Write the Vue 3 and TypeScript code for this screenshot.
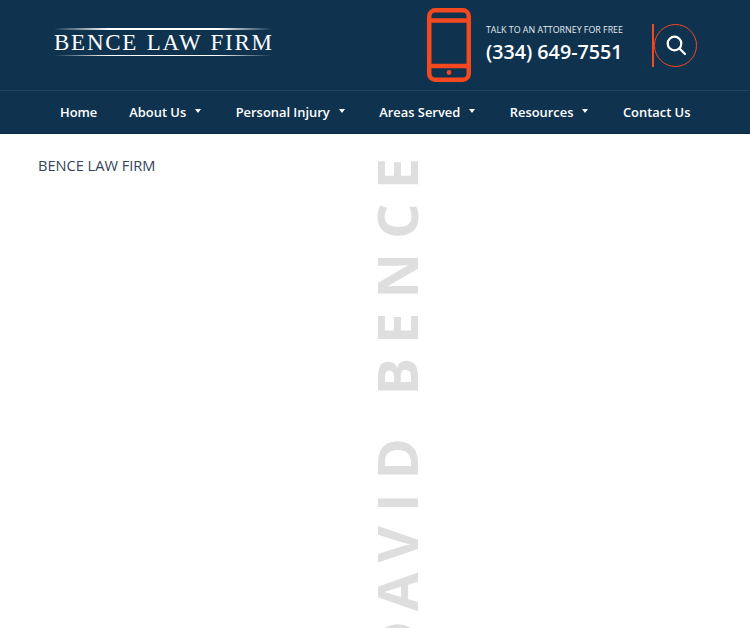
<script setup lang="ts">
interface NavItem { label: string; caret: boolean }
const nav: NavItem[] = [
  { label: 'Home', caret: false },
  { label: 'About Us', caret: true },
  { label: 'Personal Injury', caret: true },
  { label: 'Areas Served', caret: true },
  { label: 'Resources', caret: true },
  { label: 'Contact Us', caret: false },
]
</script>

<template>
  <div class="page">
    <header class="top">
      <a class="logo">
        <span class="rule"></span>
        <span class="logo-text">BENCE LAW FIRM</span>
        <span class="rule"></span>
      </a>
      <div class="contact">
        <svg class="phone" width="44" height="74" viewBox="0 0 44 74" fill="none" stroke="#f4491f" stroke-width="4.5">
          <rect x="2.25" y="2.25" width="39.5" height="69.5" rx="6" />
          <path d="M2 12.5H42M2 58H42" />
          <circle cx="22" cy="64.5" r="2.4" fill="#f4491f" stroke="none" />
        </svg>
        <div class="call">
          <div class="talk">TALK TO AN ATTORNEY FOR FREE</div>
          <div class="num">(334) 649-7551</div>
        </div>
        <div class="divider"></div>
        <div class="search">
          <svg width="22" height="22" viewBox="0 0 22 22" fill="none" stroke="#fff" stroke-width="2.2">
            <circle cx="9.5" cy="9.5" r="6.8" />
            <path d="M14.5 14.5L20 20" stroke-linecap="round" />
          </svg>
        </div>
      </div>
    </header>
    <nav class="nav">
      <a v-for="item in nav" :key="item.label" class="nav-item">
        {{ item.label }}<span v-if="item.caret" class="caret"></span>
      </a>
    </nav>
    <main class="main">
      <p class="crumb">BENCE LAW FIRM</p>
      <div class="watermark"><span class="kern">DA</span>VID BENCE</div>
    </main>
  </div>
</template>

<style>
html, body { margin: 0; padding: 0; background: #fff; overflow: hidden; }
</style>

<style scoped>
.page {
  width: 750px;
  height: 628px;
  overflow: hidden;
  font-family: "Open Sans", sans-serif;
}
.top {
  height: 90px;
  background: #0f334f;
  border-bottom: 1px solid #1d4460;
  display: flex;
  align-items: center;
  justify-content: space-between;
  padding: 0 53px 0 54px;
}
.logo {
  display: flex;
  flex-direction: column;
  align-items: stretch;
  width: 218px;
  margin-bottom: 6px;
}
.rule {
  height: 1.5px;
  background: linear-gradient(90deg, rgba(255,255,255,0), #fff 25%, #fff 75%, rgba(255,255,255,0));
}
.logo-text {
  font-family: "Liberation Serif", serif;
  font-size: 23px;
  line-height: 25px;
  letter-spacing: 1.75px;
  word-spacing: 1px;
  color: #fff;
  white-space: nowrap;
}
.contact {
  display: flex;
  align-items: center;
}
.phone { display: block; margin-right: 15px; }
.call { color: #fff; width: 166px; margin-top: -2px; }
.talk {
  font-size: 8.85px;
  line-height: 14px;
  color: #e6ebef;
  white-space: nowrap;
}
.num {
  font-size: 19.7px;
  line-height: 28px;
  font-weight: 600;
  white-space: nowrap;
  margin-top: 1px;
}
.divider {
  width: 1.5px;
  height: 43px;
  background: #f4491f;
  margin-right: 0.5px;
}
.search {
  width: 43px;
  height: 43px;
  box-sizing: border-box;
  border: 1.8px solid #f4491f;
  border-radius: 50%;
  display: flex;
  align-items: center;
  justify-content: center;
}
.nav {
  height: 43px;
  box-sizing: border-box;
  background: #0f334f;
  border-bottom: 1px solid #0b2a42;
  display: flex;
  align-items: center;
  gap: 34.5px;
  padding: 1px 0 0 60px;
}
.nav-item {
  color: #fff;
  font-size: 12.9px;
  font-weight: 600;
  line-height: 41px;
  white-space: nowrap;
  display: flex;
  align-items: center;
}
.nav-item:first-child {
  margin-right: -2.5px;
}
.caret {
  width: 0;
  height: 0;
  margin: -3px 0 0 9px;
  border-left: 3px solid transparent;
  border-right: 3px solid transparent;
  border-top: 4px solid #fff;
}
.main {
  position: relative;
  height: 494px;
}
.crumb {
  margin: 0;
  padding: 21px 0 0 38px;
  font-size: 14.6px;
  line-height: 20px;
  color: #34465a;
}
.watermark {
  position: absolute;
  left: 365px;
  top: 10px;
  writing-mode: vertical-rl;
  transform: rotate(180deg);
  font-size: 56px;
  font-weight: 700;
  letter-spacing: 14px;
  line-height: 62px;
  color: #dedede;
  white-space: nowrap;
}
.kern {
  letter-spacing: 10px;
}
</style>
